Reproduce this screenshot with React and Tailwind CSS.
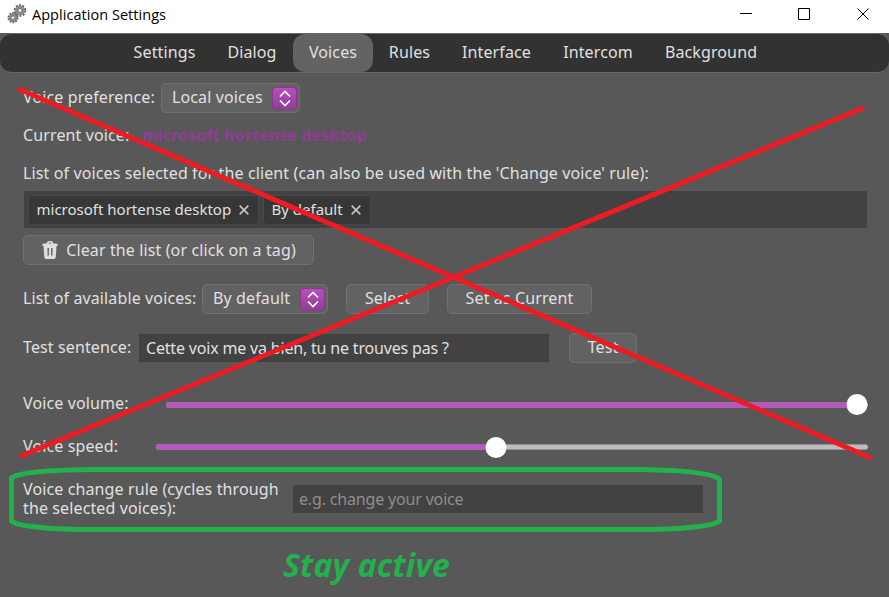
import React from "react";

const tabs = [
  { name: "Settings", width: "w-[93px]" },
  { name: "Dialog", width: "w-[82px]" },
  { name: "Voices", width: "w-[80px]", active: true },
  { name: "Rules", width: "w-[73px]" },
  { name: "Interface", width: "w-[101px]" },
  { name: "Intercom", width: "w-[102px]" },
  { name: "Background", width: "w-[124px]" },
];

function Gears() {
  return (
    <svg className="-mt-[3px] h-5 w-5 shrink-0" viewBox="0 0 20 20" fill="none">
      <circle cx="13" cy="6.500" r="5.2" stroke="#5c5c5c" strokeWidth="2.2" strokeDasharray="1.9 1.37" />
      <circle cx="13" cy="6.500" r="3.500" stroke="#8c8c8c" strokeWidth="2.800" />
      <circle cx="13" cy="6.500" r="2" fill="#fff" stroke="#666" strokeWidth=".9" />
      <circle cx="6" cy="13.700" r="4.500" stroke="#5a5a5a" strokeWidth="2" strokeDasharray="1.700 1.130" />
      <circle cx="6" cy="13.700" r="3" stroke="#868686" strokeWidth="2.600" />
      <circle cx="6" cy="13.700" r="1.600" fill="#fff" stroke="#666" strokeWidth=".8" />
    </svg>
  );
}

function TitleBar() {
  return (
    <header className="flex h-[33px] items-start bg-white pl-[7px] text-black">
      <div className="flex h-[30px] items-center gap-[5px]">
        <Gears />
        <h1 className="font-['Open_Sans',sans-serif] text-[14.5px] leading-5 tracking-[0.04px] whitespace-nowrap">Application Settings</h1>
      </div>
      <svg className="ml-auto h-7 w-[149px]" viewBox="740 0 149 28" fill="none" stroke="#000">
        <path d="M740 13.5h12M798.5 8.5h11v11h-11zM857.5 8.5l11 11M868.5 8.5l-11 11" />
      </svg>
    </header>
  );
}

function Select({ children, width }) {
  return (
    <button className={`flex h-[30px] items-center justify-between rounded-[5px] border border-[#707070] bg-[#626262] pr-[2px] pl-[10px] whitespace-nowrap ${width}`}>
      <span className="-mt-[2px]">{children}</span>
      <span className="flex h-[23px] w-[25px] items-center justify-center rounded-[4px] border border-[#8b3591] bg-linear-to-b from-[#b94fc0] to-[#8f3d96]">
        <svg className="h-[17px] w-3" viewBox="0 0 12 17" fill="none" stroke="#fff" strokeWidth="1.7">
          <path d="M1 6.5 6 1.5l5 5M1 10.5l5 5 5-5" />
        </svg>
      </span>
    </button>
  );
}

function Button({ children, className }) {
  return (
    <button className={`flex h-[30px] items-center justify-center rounded-[5px] border border-[#707070] bg-[#626262] whitespace-nowrap ${className}`}>
      {children}
    </button>
  );
}

function Tag({ children, width }) {
  return (
    <span className={`flex h-[30px] items-center justify-between rounded-[4px] border border-[#484848] bg-[#373737] pr-[9.5px] pl-[7.5px] text-[15px] tracking-normal whitespace-nowrap ${width}`}>
      {children}
      <svg className="h-[10px] w-[10px]" viewBox="0 0 10 10" stroke="#c4c4c4" strokeWidth="1.7">
        <path d="M.7.7l8.6 8.6M9.3.7.7 9.3" />
      </svg>
    </span>
  );
}

function Slider({ value, className, knob }) {
  return (
    <div className={`relative flex h-[6px] shrink-0 rounded-[3px] border-y border-[#969096] bg-[#bdbdbd] ${className}`}>
      <div className="-my-px rounded-l-[3px] border-y border-[#a06aa4] bg-[#b954c0]" style={{ width: value }} />
      <span className={`absolute h-[21px] w-[21px] -translate-x-1/2 rounded-full bg-white ${knob}`} style={{ left: value }} />
    </div>
  );
}

function Trash() {
  return (
    <svg className="h-[18px] w-4" viewBox="0 0 16 18" fill="none">
      <path fill="#dedede" fillRule="evenodd" d="M4.7 2.4C5 .8 6 0 7.2 0h1.6c1.200 0 2.200.8 2.500 2.400H14c1 0 1.700.8 2 2.300H0c.300-1.500 1-2.300 2-2.300zm1.800 0h3c-.2-.7-.5-1-1-1h-1c-.5 0-.8.3-1 1zM1.500 4.700h13l-.7 11c-.1 1.500-1 2.300-2.400 2.300H4.600c-1.400 0-2.300-.8-2.400-2.300zm4 2.300v7.500h1.400V7zm3.600 0v7.500h1.400V7z" />
    </svg>
  );
}

export default function App() {
  return (
    <div className="relative flex h-[597px] w-[889px] flex-col overflow-hidden bg-[#585858] font-['Noto_Sans',sans-serif] text-[16px] leading-[19px] tracking-[0.12px] text-[#e0e0e0]">
      <TitleBar />
      <nav className="flex h-[40px] shrink-0 justify-center rounded-xl border-y border-[#686868] bg-[#323232] pl-[2px]">
        {tabs.map((t) => (
          <button key={t.name} className={`flex items-center justify-center rounded-xl pb-[2px] ${t.width} ${t.active ? "bg-[#636363]" : ""}`}>
            {t.name}
          </button>
        ))}
      </nav>

      <main className="flex flex-col pr-[22px] pl-[23px]">
        <div className="mt-[10px] flex h-[30px] items-center">
          <span className="-mt-[2px] w-[138px] whitespace-nowrap">Voice preference:</span>
          <Select width="w-[139px]">Local voices</Select>
        </div>
        <div className="mt-[12px] flex h-5 items-center whitespace-nowrap">
          <span className="w-[119px]">Current voice:</span>
          <strong className="font-bold text-[#923b98]">microsoft hortense desktop</strong>
        </div>
        <p className="mt-[19px] h-5 whitespace-nowrap">List of voices selected for the client (can also be used with the 'Change voice' rule):</p>
        <div className="mt-[7px] ml-px flex h-[37px] items-center gap-1 bg-[#424242] px-1">
          <Tag width="w-[231px]">microsoft hortense desktop</Tag>
          <Tag width="w-[108px]">By default</Tag>
        </div>
        <Button className="mt-[7px] w-[291px] gap-2 pl-[1px]">
          <Trash />
          Clear the list (or click on a tag)
        </Button>
        <div className="mt-[19px] flex h-[30px] items-center">
          <span className="-mt-[2px] w-[179px] whitespace-nowrap">List of available voices:</span>
          <Select width="w-[126px]">By default</Select>
          <Button className="ml-[18px] w-[83px] pb-[2px]">Select</Button>
          <Button className="ml-[18px] w-[145px] pb-[2px]">Set as Current</Button>
        </div>
        <div className="mt-[19px] flex h-[30px] items-center">
          <span className="-mt-[2px] w-[116px] whitespace-nowrap">Test sentence:</span>
          <div className="flex h-[28px] w-[410px] items-center bg-[#424242] pl-[7px] tracking-[-0.18px] whitespace-nowrap">Cette voix me va bien, tu ne trouves pas ?</div>
          <Button className="ml-[20px] w-[68px] pb-[2px]">Test</Button>
        </div>
        <div className="mt-[31px] flex h-[21px] items-center">
          <span className="-mt-[3px] w-[143px] shrink-0">Voice volume:</span>
          <Slider value="691px" knob="-top-[9px]" className="w-[702px]" />
        </div>
        <div className="mt-[22px] flex h-[21px] items-center">
          <span className="-mt-[2px] w-[133px] shrink-0">Voice speed:</span>
          <Slider value="340px" knob="-top-[8px]" className="-mt-px w-[712px]" />
        </div>
        <div className="mt-[22px] flex h-[38px] items-center">
          <span className="w-[270px] whitespace-nowrap">
            Voice change rule (cycles through<br />the selected voices):
          </span>
          <div className="flex h-[28px] w-[410px] items-center bg-[#424242] pl-[6px] tracking-[-0.17px] text-[#8e8e8e]">e.g. change your voice</div>
        </div>
        <p className="mt-[27px] ml-[260px] h-[42px] text-[32px] leading-[40px] font-bold tracking-[0.15px] text-[#22b14c] italic">Stay active</p>
      </main>

      <svg className="pointer-events-none absolute inset-0 h-full w-full" viewBox="0 0 889 597" fill="none" strokeLinecap="round" strokeWidth="5">
        <path stroke="#ed1c24" d="M20 89.5 870 457.5M22 455.5 862 108.5" />
        <path stroke="#22b14c" strokeLinejoin="round" d="M90 469.5H640Q710 470.5 719.5 479.5V521Q711 528 652 529.5H78Q20 528 11.5 521V478Q20 470.5 90 469.5Z" />
      </svg>
    </div>
  );
}
